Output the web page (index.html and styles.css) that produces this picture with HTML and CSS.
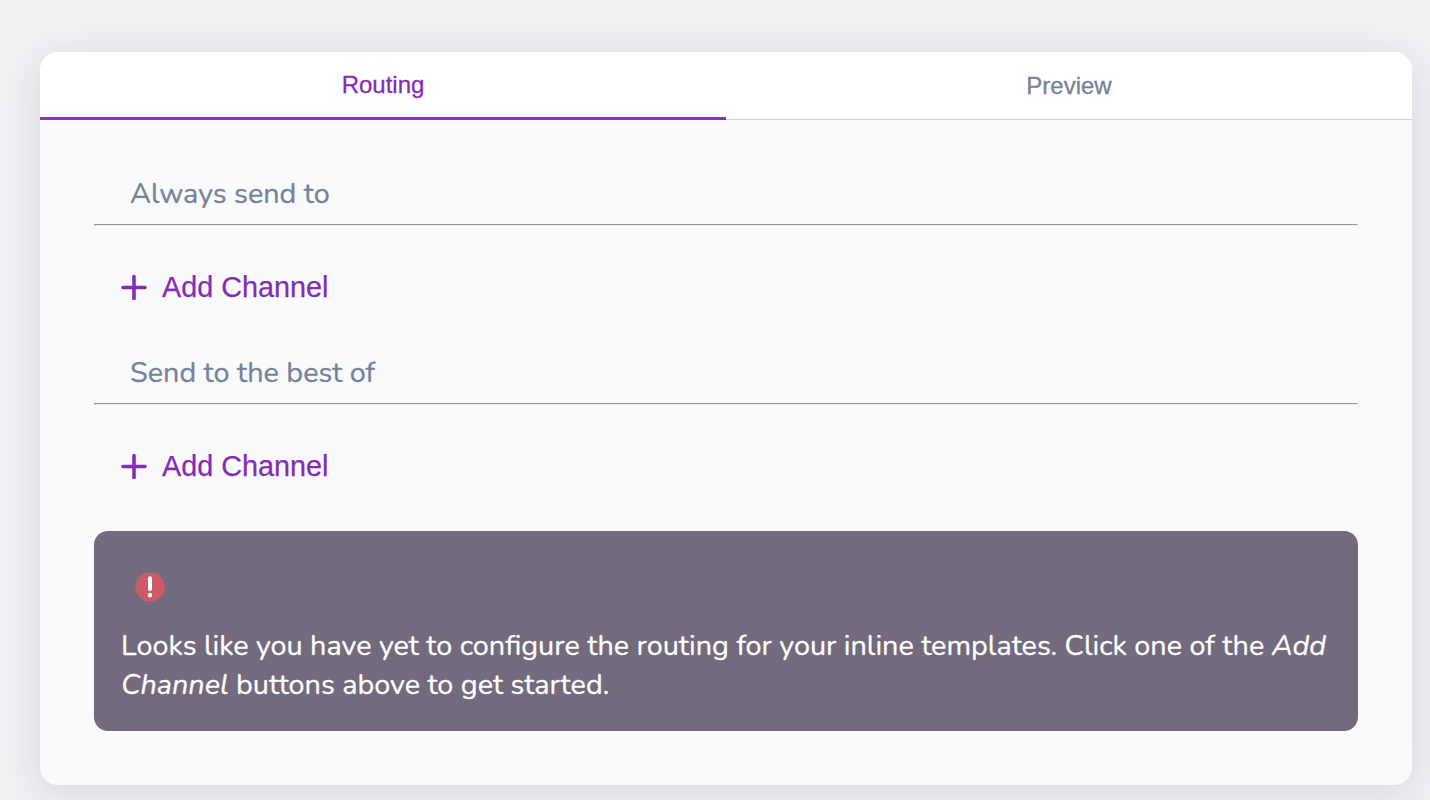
FILE: index.html
```html
<!DOCTYPE html>
<html lang="en">
<head>
<meta charset="utf-8">
<title>Routing</title>
<link rel="stylesheet" href="styles.css">
</head>
<body>
<main class="panel">
  <nav class="tabs">
    <button class="tab tab-active"><span class="tab-label">Routing</span></button>
    <button class="tab"><span class="tab-label">Preview</span></button>
  </nav>
  <div class="content">
    <section class="group">
      <h2 class="heading">Always send to</h2>
      <hr class="rule">
      <button class="add"><svg class="plus" viewBox="0 0 26 26"><path d="M13 2.5v22M2 13.5h22"/></svg><span>Add Channel</span></button>
    </section>
    <section class="group">
      <h2 class="heading">Send to the best of</h2>
      <hr class="rule">
      <button class="add"><svg class="plus" viewBox="0 0 26 26"><path d="M13 2.5v22M2 13.5h22"/></svg><span>Add Channel</span></button>
    </section>
    <aside class="notice">
      <svg class="alert" viewBox="0 0 30 30"><circle cx="15" cy="15" r="14.6"/><path d="M15 6.2v10.8"/><path d="M15 22.8v.8"/></svg>
      <p class="message"><span class="line">Looks like you have yet to configure the routing for your inline templates. Click one of the <em>Add</em></span> <span class="line"><em>Channel</em> buttons above to get started.</span></p>
    </aside>
  </div>
</main>
</body>
</html>
```
FILE: styles.css
```css
* { box-sizing: border-box; }
body { margin: 0; padding: 52px 18px 15px 40px; height: 800px; overflow: hidden; background: #f0f1f3; font-family: Nunito, "Open Sans", sans-serif; }
.panel { height: 733px; border-radius: 18px; overflow: hidden; background: #f9fafc; box-shadow: 0 8px 44px rgba(55, 35, 75, .12); }
.tabs { display: flex; height: 68px; background: #fff; }
.tab { flex: 1; padding: 0; border: 0; border-bottom: 1px solid #cbd2dc; background: none; color: #76819b; font: 24px "Liberation Sans", Arial, sans-serif; -webkit-text-stroke: .3px currentColor; }
.tab-active { border-bottom: 3px solid #8730b8; color: #852bb8; }
.content { padding: 45px 54px 0; }
.group { height: 179px; }
.heading { height: 59px; margin: 0; padding: 9px 36px 0; color: #76819b; font-size: 28.8px; line-height: 40px; font-weight: 400; -webkit-text-stroke: .28px currentColor; }
.rule { height: 2px; margin: 0; border: 1px solid; border-color: #96979a #ededee #ededee #96979a; }
.add { display: flex; align-items: center; gap: 15px; margin: 41px 0 0 27px; padding: 0; border: 0; height: 40px; background: none; color: #852bb8; font: 28.8px "Liberation Sans", Arial, sans-serif; -webkit-text-stroke: .25px currentColor; }
.plus { width: 26px; height: 26px; fill: none; stroke: currentColor; stroke-width: 3.6; stroke-linecap: round; }
.notice { height: 200px; margin-top: 8px; padding: 41px 27px 0; border-radius: 14px; background: #736a7d; color: #fff; }
.alert { display: block; width: 30px; height: 30px; margin-left: 14px; fill: #cf5a67; stroke: #fff; stroke-width: 4; stroke-linecap: round; }
.alert circle { stroke: none; }
.message { margin: 24px 0 0; font-size: 28.8px; line-height: 39px; font-weight: 400; -webkit-text-stroke: .28px currentColor; }
.line { display: block; white-space: nowrap; }
```
